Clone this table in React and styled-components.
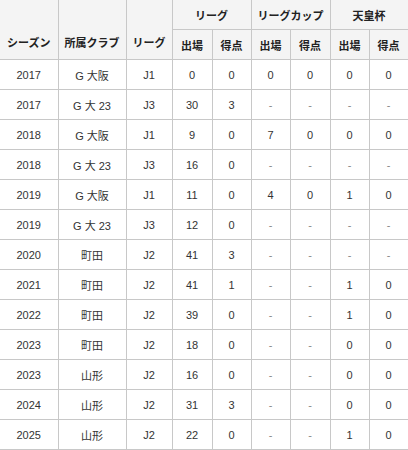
import React from "react";
import styled, { createGlobalStyle } from "styled-components";

const GlobalStyle = createGlobalStyle`
    html, body {
        margin: 0;
        padding: 0;
        background: #fff;
    }
    body {
        font-family: "Liberation Sans", Arial, "Noto Sans CJK JP", sans-serif;
        color: #333;
    }
`

const Table = styled.table`
    width: 408px;
    border-collapse: collapse;
    table-layout: fixed;
    font-size: 11px;
`

const HeadCell = styled.th`
    height: 29px;
    padding: 0;
    background: #f4f4f4;
    font-weight: bold;
    color: #222;
    text-align: center;
    vertical-align: ${({ low }) => (low ? 'bottom' : 'middle')};
    border-right: 1px solid #c8c8c8;
    border-bottom: 1px solid #c8c8c8;
    ${({ low }) => low && 'padding-bottom: 9px;'}
`

const Cell = styled.td`
    height: 29px;
    padding: 0;
    text-align: center;
    vertical-align: middle;
    color: ${({ dash }) => (dash ? '#888' : '#333')};
    border-right: 1px solid #c8c8c8;
    border-bottom: 1px solid #c8c8c8;
`

const widths = [58, 68, 46, 40, 39, 39, 40, 39, 39]

const rows = [
    ['2017', 'G 大阪', 'J1', '0', '0', '0', '0', '0', '0'],
    ['2017', 'G 大 23', 'J3', '30', '3', '-', '-', '-', '-'],
    ['2018', 'G 大阪', 'J1', '9', '0', '7', '0', '0', '0'],
    ['2018', 'G 大 23', 'J3', '16', '0', '-', '-', '-', '-'],
    ['2019', 'G 大阪', 'J1', '11', '0', '4', '0', '1', '0'],
    ['2019', 'G 大 23', 'J3', '12', '0', '-', '-', '-', '-'],
    ['2020', '町田', 'J2', '41', '3', '-', '-', '-', '-'],
    ['2021', '町田', 'J2', '41', '1', '-', '-', '1', '0'],
    ['2022', '町田', 'J2', '39', '0', '-', '-', '1', '0'],
    ['2023', '町田', 'J2', '18', '0', '-', '-', '0', '0'],
    ['2023', '山形', 'J2', '16', '0', '-', '-', '0', '0'],
    ['2024', '山形', 'J2', '31', '3', '-', '-', '0', '0'],
    ['2025', '山形', 'J2', '22', '0', '-', '-', '1', '0'],
]

const App = () => {
    return (
        <>
            <GlobalStyle />
            <Table>
                <colgroup>
                    {widths.map((w, i) => (
                        <col key={i} style={{ width: w }} />
                    ))}
                </colgroup>
                <thead>
                    <tr>
                        <HeadCell rowSpan={2} low>シーズン</HeadCell>
                        <HeadCell rowSpan={2} low>所属クラブ</HeadCell>
                        <HeadCell rowSpan={2} low>リーグ</HeadCell>
                        <HeadCell colSpan={2}>リーグ</HeadCell>
                        <HeadCell colSpan={2}>リーグカップ</HeadCell>
                        <HeadCell colSpan={2}>天皇杯</HeadCell>
                    </tr>
                    <tr>
                        <HeadCell>出場</HeadCell>
                        <HeadCell>得点</HeadCell>
                        <HeadCell>出場</HeadCell>
                        <HeadCell>得点</HeadCell>
                        <HeadCell>出場</HeadCell>
                        <HeadCell>得点</HeadCell>
                    </tr>
                </thead>
                <tbody>
                    {rows.map((r, i) => (
                        <tr key={i}>
                            {r.map((v, j) => (
                                <Cell key={j} dash={v === '-'}>{v}</Cell>
                            ))}
                        </tr>
                    ))}
                </tbody>
            </Table>
        </>
    )
}

export default App
